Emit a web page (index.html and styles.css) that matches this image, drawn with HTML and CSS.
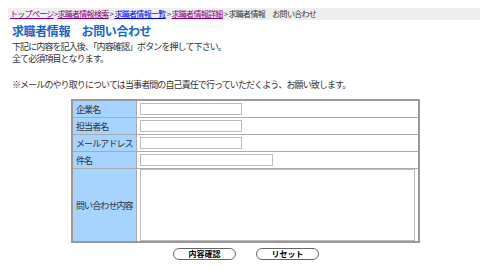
FILE: index.html
```html
<!DOCTYPE html>
<html lang="ja">
<head>
  <meta charset="UTF-8">
  <title>求職者情報 お問い合わせ</title>
  <link rel="stylesheet" href="styles.css">
</head>
<body>

<div class="pankuzu">
  <a href="#" class="visitado">トップページ</a>&gt;<a href="#" class="visitado">求職者情報検索</a> &gt; <a href="#">求職者情報一覧</a> &gt; <a href="#" class="visitado">求職者情報詳細</a> &gt; 求職者情報　お問い合わせ
</div>

<div class="contenido">
  <h1>求職者情報　お問い合わせ</h1>
  <p>下記に内容を記入後、「内容確認」ボタンを押して下さい。</p>
  <p>全て必須項目となります。</p>
  <p class="aviso">※メールのやり取りについては当事者間の自己責任で行っていただくよう、お願い致します。</p>

  <table class="formulario">
    <tr>
      <th>企業名</th>
      <td><input type="text" class="corto"></td>
    </tr>
    <tr>
      <th>担当者名</th>
      <td><input type="text" class="corto"></td>
    </tr>
    <tr>
      <th>メールアドレス</th>
      <td><input type="text" class="corto"></td>
    </tr>
    <tr>
      <th>件名</th>
      <td><input type="text" class="largo"></td>
    </tr>
    <tr>
      <th>問い合わせ内容</th>
      <td class="celda-texto"><textarea></textarea></td>
    </tr>
  </table>

  <div class="botones">
    <button>内容確認</button>
    <button>リセット</button>
  </div>
</div>

</body>
</html>
```

FILE: styles.css
```css
body {
  margin: 0;
  padding: 8px 10px 0 8px;
  font-family: "MS PGothic", "Noto Sans CJK JP", sans-serif;
  font-size: 9px;
  letter-spacing: -0.9px;
  color: #333;
  background-color: #fff;
}
.pankuzu {
  background-color: #eee;
  height: 12px;
  line-height: 12px;
  padding-left: 2px;
  font-size: 8px;
  letter-spacing: -0.7px;
  white-space: nowrap;
  overflow: hidden;
}
.pankuzu a {
  color: #0000ee;
}
.pankuzu a.visitado {
  color: #800080;
}
.contenido {
  padding-left: 4px;
}
h1 {
  margin: 4px 0 3px 0;
  font-size: 12px;
  line-height: 14px;
  letter-spacing: -0.4px;
  color: #1466c8;
}
p {
  margin: 0;
  line-height: 12px;
}
.aviso {
  margin-top: 14px;
  margin-bottom: 8px;
}
.formulario {
  margin-left: 59px;
  width: 349px;
  border-collapse: collapse;
  border: 2px solid #999;
}
.formulario th,
.formulario td {
  border: 1px solid #aaa;
  padding: 0 3px;
  height: 16px;
  font-weight: normal;
  text-align: left;
}
.formulario th {
  width: 61px;
  background-color: #a6d3ff;
  white-space: nowrap;
}
.formulario td {
  background-color: #fff;
}
input[type="text"] {
  box-sizing: border-box;
  height: 12px;
  margin: 0;
  padding: 0;
  border: 1px solid #bbb;
  display: block;
}
.corto {
  width: 102px;
}
.largo {
  width: 133px;
}
.celda-texto {
  height: 77px;
}
textarea {
  box-sizing: border-box;
  display: block;
  width: 275px;
  height: 72px;
  margin: 0;
  border: 1px solid #bbb;
  resize: none;
  overflow-y: scroll;
}
.botones {
  display: flex;
  gap: 20px;
  margin: 5px 0 0 161px;
}
.botones button {
  width: 63px;
  height: 12px;
  padding: 0;
  font-family: inherit;
  font-size: 8px;
  font-weight: bold;
  line-height: 10px;
  letter-spacing: 0;
  background-color: #fff;
  border: 1px solid #666;
  border-radius: 6px;
  color: #000;
}
```
